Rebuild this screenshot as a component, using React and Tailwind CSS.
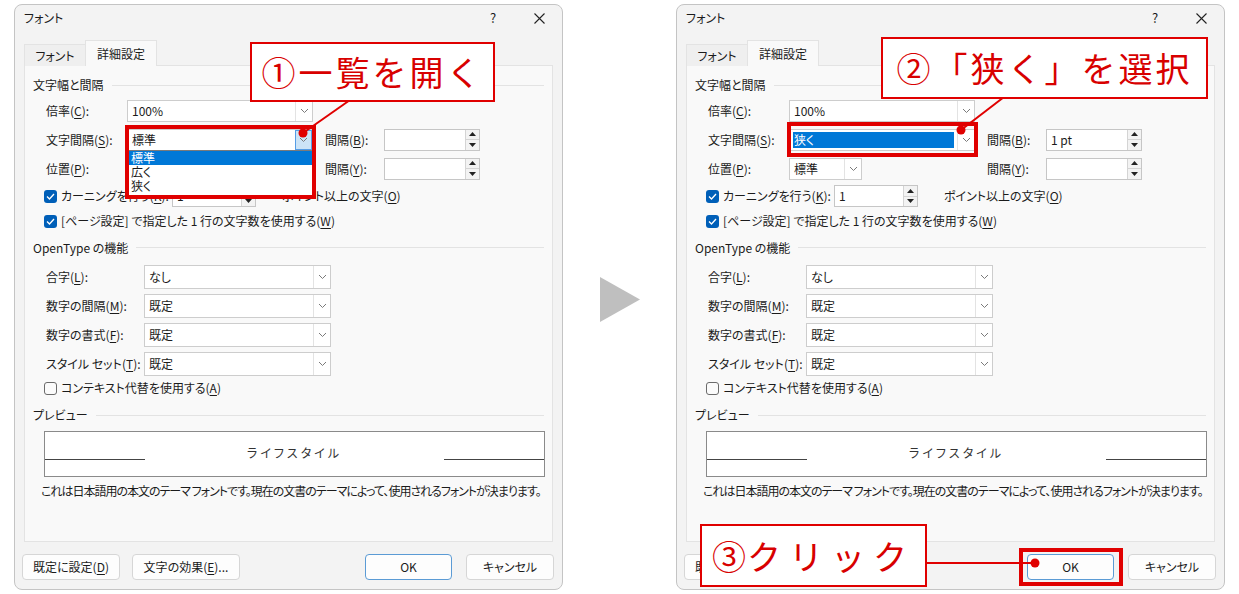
import React from "react";

const UI = "font-['Noto_Sans_CJK_JP','Noto_Sans',sans-serif] [font-feature-settings:'palt']";
const CALLOUT = "font-['Noto_Sans_CJK_JP','Noto_Sans',sans-serif]";

function U({ children }) {
    return <span className="underline underline-offset-[2px]">{children}</span>;
}

function Chevron() {
    return (
        <svg width="9" height="6" viewBox="0 0 9 6">
            <path d="M1 1 L4.5 4.5 L8 1" stroke="#7a7a7a" strokeWidth="1" fill="none" />
        </svg>
    );
}

function Select({ className, value, selected, open, children }) {
    return (
        <div className={`relative flex bg-white border border-[#cdcdcd] ${className}`}>
            <div className="flex-1 flex items-center px-[3px] min-w-0">
                {selected ? (
                    <span className="flex-1 h-[16px] bg-[#0078d7] text-white flex items-center px-[1px]">{value}</span>
                ) : (
                    <span className="pl-[1px]">{value}</span>
                )}
            </div>
            <div
                className={`w-[17px] flex items-center justify-center ${
                    open ? "bg-[#cce4f7] border border-[#569de5]" : "border-l border-[#e3e3e3]"
                }`}
            >
                <Chevron />
            </div>
            {children}
        </div>
    );
}

function Spin({ className, value }) {
    return (
        <div className={`flex bg-white border border-[#c6c6c6] ${className}`}>
            <div className="flex-1 flex items-center px-[4px]">{value}</div>
            <div className="w-[14px] flex flex-col border-l border-[#d4d4d4] bg-[#f3f3f3]">
                <div className="flex-1 flex items-center justify-center border-b border-[#d4d4d4]">
                    <svg width="7" height="4" viewBox="0 0 7 4">
                        <path d="M0 4 L3.5 0 L7 4 Z" fill="#222" />
                    </svg>
                </div>
                <div className="flex-1 flex items-center justify-center">
                    <svg width="7" height="4" viewBox="0 0 7 4">
                        <path d="M0 0 L3.5 4 L7 0 Z" fill="#222" />
                    </svg>
                </div>
            </div>
        </div>
    );
}

function Check({ checked }) {
    return checked ? (
        <div className="w-[13px] h-[13px] rounded-[3px] bg-[#005fb8] flex items-center justify-center shrink-0">
            <svg width="9" height="7" viewBox="0 0 9 7">
                <path d="M1 3.5 L3.5 6 L8 1" stroke="white" strokeWidth="1.3" fill="none" />
            </svg>
        </div>
    ) : (
        <div className="w-[13px] h-[13px] rounded-[3px] border border-[#6b6b6b] bg-[#fbfbfb] shrink-0" />
    );
}

function Group({ title, className }) {
    return (
        <div className={`flex items-center gap-[8px] ${className}`}>
            <span>{title}</span>
            <div className="flex-1 h-px bg-[#e3e3e3]" />
        </div>
    );
}

function Btn({ children, className, primary }) {
    return (
        <div
            className={`h-[26px] flex items-center justify-center rounded-[4px] border bg-[#fdfdfd] ${
                primary ? "border-[#5b9bd5]" : "border-[#d6d6d6]"
            } ${className}`}
        >
            {children}
        </div>
    );
}

function Dialog({ right }) {
    return (
        <div className={`w-[549px] h-[586px] flex flex-col bg-[#f3f3f3] border border-[#c4c4c4] rounded-[8px] text-[12px] text-[#1b1b1b] ${UI}`}>
            {/* タイトルバー */}
            <div className="h-[26px] flex items-center">
                <span className="pl-[9px] flex-1">フォント</span>
                <div className="w-[46px] flex justify-center text-[13px]">?</div>
                <div className="w-[46px] flex justify-center">
                    <svg width="11" height="11" viewBox="0 0 11 11">
                        <path d="M0.5 0.5 L10.5 10.5 M10.5 0.5 L0.5 10.5" stroke="#222" strokeWidth="1.1" />
                    </svg>
                </div>
            </div>

            {/* タブ */}
            <div className="flex items-end pl-[9px] mt-[8px] h-[26px] relative z-10">
                <div className="w-[61px] h-[22px] flex items-center justify-center bg-[#efefef] border-t border-l border-[#e3e3e3] -mb-px">
                    フォント
                </div>
                <div className="w-[72px] h-[26px] flex items-center justify-center bg-[#f9f9f9] border border-b-0 border-[#e3e3e3] -mb-px">
                    詳細設定
                </div>
            </div>

            {/* パネル */}
            <div className="mx-[9px] h-[477px] bg-[#f9f9f9] border border-[#e3e3e3] px-[8px] pt-[8px] flex flex-col">
                <Group title="文字幅と間隔" className="h-[22px]" />

                <div className="h-[29px] flex items-center ml-[13px]">
                    <span className="w-[81px]">倍率(<U>C</U>):</span>
                    <Select className="w-[186px] h-[22px]" value="100%" />
                </div>

                <div className="h-[29px] flex items-center ml-[13px] relative z-20">
                    <span className="w-[81px]">文字間隔(<U>S</U>):</span>
                    {right ? (
                        <Select className="w-[186px] h-[22px]" value="狭く" selected />
                    ) : (
                        <Select className="w-[186px] h-[22px]" value="標準" open>
                            <div className="absolute left-[-1px] right-[-1px] top-full bg-white border border-[#7a7a7a] flex flex-col pb-[2px] leading-[14px]">
                                <span className="h-[14px] bg-[#0078d7] text-white px-[3px]">標準</span>
                                <span className="h-[14px] px-[3px]">広く</span>
                                <span className="h-[14px] px-[3px]">狭く</span>
                            </div>
                        </Select>
                    )}
                    <span className="w-[59px] ml-[12px]">間隔(<U>B</U>):</span>
                    <Spin className="w-[96px] h-[22px]" value={right ? "1 pt" : ""} />
                </div>

                <div className="h-[29px] flex items-center ml-[13px]">
                    <span className="w-[81px]">位置(<U>P</U>):</span>
                    <Select className="w-[73px] h-[22px]" value="標準" />
                    <span className="w-[59px] ml-[125px]">間隔(<U>Y</U>):</span>
                    <Spin className="w-[96px] h-[22px]" value="" />
                </div>

                <div className="h-[26px] flex items-center ml-[11px]">
                    <Check checked />
                    <span className="w-[111px] ml-[4px]">カーニングを行う(<U>K</U>):</span>
                    <Spin className="w-[84px] h-[22px]" value="1" />
                    <span className="ml-[26px]">ポイント以上の文字(<U>O</U>)</span>
                </div>

                <div className="h-[24px] flex items-center ml-[11px]">
                    <Check checked />
                    <span className="ml-[4px]">[ページ設定] で指定した 1 行の文字数を使用する(<U>W</U>)</span>
                </div>

                <Group title="OpenType の機能" className="h-[29px]" />

                {[
                    ["合字(", "L", "):", "なし"],
                    ["数字の間隔(", "M", "):", "既定"],
                    ["数字の書式(", "F", "):", "既定"],
                    ["スタイル セット(", "T", "):", "既定"],
                ].map(([a, k, b, v]) => (
                    <div key={k} className="h-[29px] flex items-center ml-[13px]">
                        <span className="w-[98px]">
                            {a}
                            <U>{k}</U>
                            {b}
                        </span>
                        <Select className="w-[187px] h-[24px]" value={v} />
                    </div>
                ))}

                <div className="h-[20px] flex items-center ml-[11px]">
                    <Check />
                    <span className="ml-[4px]">コンテキスト代替を使用する(<U>A</U>)</span>
                </div>

                <Group title="プレビュー" className="h-[20px] mt-[7px]" />

                <div className="mt-[6px] ml-[11px] w-[501px] h-[46px] bg-white border border-[#8a8a8a] flex items-end pb-[16px]">
                    <div className="w-[100px] h-px bg-[#444]" />
                    <span className="flex-1 text-center tracking-[3px] text-[#333] leading-none translate-y-[-1px]">
                        ライフスタイル
                    </span>
                    <div className="w-[100px] h-px bg-[#444]" />
                </div>

                <div className="mt-[4px] ml-[8px] h-[20px] flex items-center whitespace-nowrap tracking-[-1px]">
                    これは日本語用の本文のテーマ フォントです。現在の文書のテーマによって、使用されるフォントが決まります。
                </div>
            </div>

            {/* ボタン */}
            <div className="flex items-center mt-[12px] pl-[7px] pr-[8px]">
                <Btn className="w-[98px]">既定に設定(<U>D</U>)</Btn>
                <Btn className="w-[108px] ml-[12px]">文字の効果(<U>E</U>)...</Btn>
                <div className="flex-1" />
                <Btn className="w-[87px]" primary>
                    OK
                </Btn>
                <Btn className="w-[88px] ml-[14px]">キャンセル</Btn>
            </div>
        </div>
    );
}

function Callout({ className, children }) {
    return (
        <div
            className={`absolute bg-white border-2 border-[#e00000] flex items-center justify-center text-[#d80000] text-[34px] leading-none ${CALLOUT} ${className}`}
        >
            {children}
        </div>
    );
}

export default function App() {
    return (
        <div className="relative w-[1239px] h-[594px] bg-white overflow-hidden flex pl-[14px] pt-[4px]">
            <Dialog />
            <div className="w-[113px] flex items-center justify-center">
                <svg width="40" height="45" viewBox="0 0 40 45">
                    <path d="M0 0 L40 22.5 L0 45 Z" fill="#bfbfbf" />
                </svg>
            </div>
            <Dialog right />

            {/* 注釈 */}
            <div className="absolute left-[125px] top-[125px] w-[191px] h-[74px] border-4 border-[#e00000] z-30" />
            <div className="absolute left-[787px] top-[122px] w-[191px] h-[35px] border-4 border-[#e00000] z-30" />
            <div className="absolute left-[1019px] top-[548px] w-[104px] h-[38px] border-4 border-[#e00000] z-30" />

            <svg className="absolute inset-0 z-30 pointer-events-none" width="1239" height="594">
                <line x1="350" y1="100" x2="303" y2="133" stroke="#e00000" strokeWidth="2" />
                <circle cx="303" cy="133" r="4.5" fill="#e00000" />
                <line x1="1004" y1="97" x2="961" y2="130" stroke="#e00000" strokeWidth="2" />
                <circle cx="961" cy="130" r="4.5" fill="#e00000" />
                <line x1="925" y1="563" x2="1035" y2="563" stroke="#e00000" strokeWidth="2" />
                <circle cx="1035" cy="563" r="4.5" fill="#e00000" />
            </svg>

            <Callout className="left-[250px] top-[42px] w-[245px] h-[60px] tracking-[3px] z-40">①一覧を開く</Callout>
            <Callout className="left-[881px] top-[37px] w-[327px] h-[62px] tracking-[3px] z-40">②「狭く」を選択</Callout>
            <Callout className="left-[700px] top-[524px] w-[227px] h-[63px] z-40">
                <span className="tracking-[1px]">③</span>
                <span className="tracking-[8px]">クリック</span>
            </Callout>
        </div>
    );
}
